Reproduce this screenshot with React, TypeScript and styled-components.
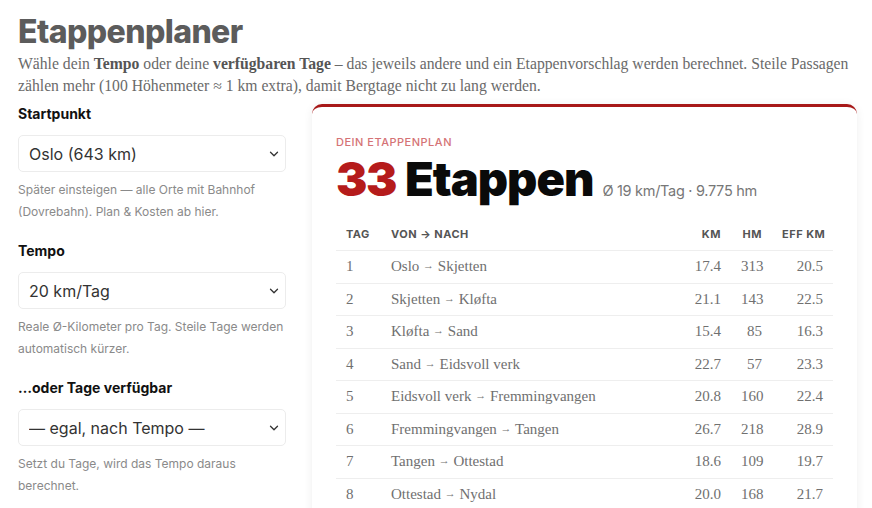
import styled, { createGlobalStyle } from "styled-components";
import { ChevronDown } from "lucide-react";

const GlobalStyle = createGlobalStyle`
    body {
        margin: 0;
        background: #fff;
        font-family: "Liberation Serif", serif;
    }
`

type Stage = { day: number; from: string; to: string; km: string; hm: number; eff: string };

const stages: Stage[] = [
    { day: 1, from: "Oslo", to: "Skjetten", km: "17.4", hm: 313, eff: "20.5" },
    { day: 2, from: "Skjetten", to: "Kløfta", km: "21.1", hm: 143, eff: "22.5" },
    { day: 3, from: "Kløfta", to: "Sand", km: "15.4", hm: 85, eff: "16.3" },
    { day: 4, from: "Sand", to: "Eidsvoll verk", km: "22.7", hm: 57, eff: "23.3" },
    { day: 5, from: "Eidsvoll verk", to: "Fremmingvangen", km: "20.8", hm: 160, eff: "22.4" },
    { day: 6, from: "Fremmingvangen", to: "Tangen", km: "26.7", hm: 218, eff: "28.9" },
    { day: 7, from: "Tangen", to: "Ottestad", km: "18.6", hm: 109, eff: "19.7" },
    { day: 8, from: "Ottestad", to: "Nydal", km: "20.0", hm: 168, eff: "21.7" },
]

const fields = [
    {
        label: "Startpunkt",
        value: "Oslo (643 km)",
        help: "Später einsteigen — alle Orte mit Bahnhof (Dovrebahn). Plan & Kosten ab hier.",
    },
    {
        label: "Tempo",
        value: "20 km/Tag",
        help: "Reale Ø-Kilometer pro Tag. Steile Tage werden automatisch kürzer.",
    },
    {
        label: "…oder Tage verfügbar",
        value: "— egal, nach Tempo —",
        help: "Setzt du Tage, wird das Tempo daraus berechnet.",
    },
]

export default function App() {
    return (
        <Page>
            <GlobalStyle />
            <Title>Etappenplaner</Title>
            <Intro>
                Wähle dein <b>Tempo</b> oder deine <b>verfügbaren Tage</b> – das jeweils andere und ein
                Etappenvorschlag werden berechnet. Steile Passagen zählen mehr (100 Höhenmeter ≈ 1 km
                extra), damit Bergtage nicht zu lang werden.
            </Intro>
            <Layout>
                <Controls>
                    {fields.map((f) => (
                        <Field key={f.label}>
                            <Label>{f.label}</Label>
                            <SelectWrap>
                                <Select defaultValue={f.value}>
                                    <option>{f.value}</option>
                                </Select>
                                <Chevron size={14} strokeWidth={2.2} />
                            </SelectWrap>
                            <Help>{f.help}</Help>
                        </Field>
                    ))}
                </Controls>
                <Card>
                    <Eyebrow>Dein Etappenplan</Eyebrow>
                    <Summary>
                        <Count>33</Count>
                        <Big>Etappen</Big>
                        <Stats>Ø 19 km/Tag · 9.775 hm</Stats>
                    </Summary>
                    <Table>
                        <colgroup>
                            <col style={{ width: 45 }} />
                            <col />
                            <col style={{ width: 48 }} />
                            <col style={{ width: 41 }} />
                            <col style={{ width: 61 }} />
                        </colgroup>
                        <thead>
                            <tr>
                                <Th>Tag</Th>
                                <Th>Von → Nach</Th>
                                <Th $right>km</Th>
                                <Th $right>hm</Th>
                                <Th $right>eff km</Th>
                            </tr>
                        </thead>
                        <tbody>
                            {stages.map((s) => (
                                <tr key={s.day}>
                                    <Td>{s.day}</Td>
                                    <Td>
                                        {s.from} <Arrow>→</Arrow> {s.to}
                                    </Td>
                                    <Td $right>{s.km}</Td>
                                    <Td $right>{s.hm}</Td>
                                    <Td $right>{s.eff}</Td>
                                </tr>
                            ))}
                        </tbody>
                    </Table>
                </Card>
            </Layout>
        </Page>
    )
}

const Page = styled.div`
    padding: 12px 15px 0 18px;
    height: 508px;
    box-sizing: border-box;
    overflow: hidden;
`

const Title = styled.h1`
    margin: 0;
    font-family: "Inter", sans-serif;
    font-weight: 800;
    font-size: 32px;
    line-height: 40px;
    letter-spacing: -0.6px;
    color: #5c5c5c;
`

const Intro = styled.p`
    margin: 1px 0 0;
    font-size: 15.7px;
    line-height: 22px;
    color: #6a6a6a;

    b {
        font-weight: 700;
        color: #555;
    }
`

const Layout = styled.div`
    display: grid;
    grid-template-columns: 268px 1fr;
    gap: 26px;
    margin-top: 7px;
`

const Controls = styled.div`
    display: flex;
    flex-direction: column;
    gap: 18px;
`

const Field = styled.div`
    display: flex;
    flex-direction: column;
`

const Label = styled.label`
    font-family: "Inter", sans-serif;
    font-weight: 700;
    font-size: 14px;
    line-height: 20px;
    color: #111;
    margin-bottom: 11px;
`

const SelectWrap = styled.div`
    position: relative;
`

const Select = styled.select`
    appearance: none;
    width: 100%;
    height: 37px;
    padding: 0 30px 0 10px;
    border: 1px solid #ececec;
    border-radius: 5px;
    background: #fff;
    font-family: "Inter", sans-serif;
    font-size: 16px;
    color: #333;
`

const Chevron = styled(ChevronDown)`
    position: absolute;
    right: 5px;
    top: 12px;
    color: #333;
    pointer-events: none;
`

const Help = styled.p`
    margin: 7px 0 0;
    font-family: "Inter", sans-serif;
    font-size: 12px;
    line-height: 22px;
    color: #8a8a8a;
`

const Card = styled.section`
    background: #fff;
    border-top: 3px solid #a71818;
    border-radius: 10px;
    box-shadow: 0 1px 10px rgba(0, 0, 0, 0.07);
    padding: 28px 24px 0 24px;
    min-height: 420px;
`

const Eyebrow = styled.div`
    font-family: "Inter", sans-serif;
    font-size: 11px;
    font-weight: 500;
    letter-spacing: 0.5px;
    text-transform: uppercase;
    color: #d57376;
    line-height: 14px;
`

const Summary = styled.div`
    display: flex;
    align-items: baseline;
    gap: 9px;
    margin-top: 5px;
    line-height: 50px;
`

const Count = styled.span`
    font-family: "Inter", sans-serif;
    font-weight: 900;
    font-size: 47px;
    letter-spacing: -1.5px;
    color: #b51b1b;
`

const Big = styled.span`
    font-family: "Inter", sans-serif;
    font-weight: 900;
    font-size: 47px;
    letter-spacing: -1px;
    color: #0a0a0a;
`

const Stats = styled.span`
    font-family: "Inter", sans-serif;
    font-size: 14.5px;
    letter-spacing: -0.3px;
    color: #777;
`

const Table = styled.table`
    width: 100%;
    table-layout: fixed;
    border-collapse: collapse;
    margin-top: 2px;
`

const Th = styled.th<{ $right?: boolean }>`
    text-align: ${(p) => (p.$right ? "right" : "left")};
    font-family: "Inter", sans-serif;
    font-weight: 700;
    font-size: 11px;
    letter-spacing: 0.5px;
    text-transform: uppercase;
    white-space: nowrap;
    color: #555;
    height: 32px;
    padding: 0 10px;
    border-bottom: 1px solid #eee;
`

const Td = styled.td<{ $right?: boolean }>`
    text-align: ${(p) => (p.$right ? "right" : "left")};
    font-size: 15px;
    color: #707070;
    height: 31.5px;
    padding: 0 10px;
    border-bottom: 1px solid #eee;
    white-space: nowrap;
`

const Arrow = styled.span`
    font-size: 11px;
    vertical-align: 2px;
`
